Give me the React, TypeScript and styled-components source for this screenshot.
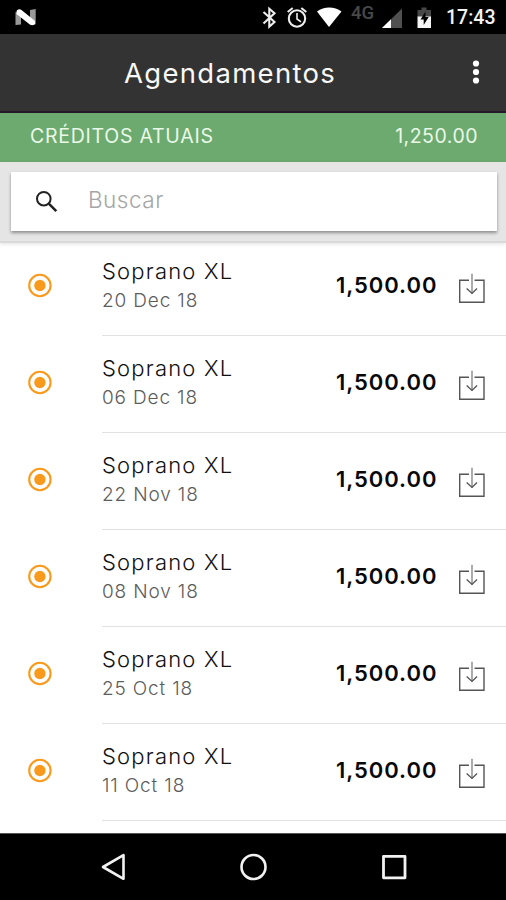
import React from 'react';
import styled, { createGlobalStyle } from 'styled-components';

const GlobalStyle = createGlobalStyle`
  * { box-sizing: border-box; }
  body { margin: 0; background: #fff; }
`;

const Screen = styled.div`
  width: 506px;
  height: 900px;
  display: flex;
  flex-direction: column;
  overflow: hidden;
  background: #fff;
  font-family: Inter, 'Open Sans', sans-serif;
  white-space: nowrap;
`;

const StatusBar = styled.header`
  flex: none;
  height: 34px;
  display: flex;
  justify-content: space-between;
  background: #000;
`;

const Clock = styled.span`
  font: 500 19.5px/36px Roboto, sans-serif;
  color: #f2f2f2;
  width: 62px;
  padding-left: 2px;
  letter-spacing: 0;
`;

const StatusIcons = styled.div`
  display: flex;
`;

const NetworkLabel = styled.span`
  font: 500 18.5px/26px Roboto, sans-serif;
  color: #484848;
  width: 31px;
`;

const AppBar = styled.div`
  flex: none;
  height: 79px;
  display: flex;
  align-items: center;
  background: #333;
  border-bottom: 2px solid #241a29;
  padding-left: 124px;
`;

const Title = styled.h1`
  flex: 1;
  margin: 0;
  font-size: 27.5px;
  font-weight: 400;
  line-height: 36px;
  letter-spacing: 1.3px;
  color: #f8f8f8;
`;

const MenuButton = styled.button`
  display: flex;
  border: 0;
  padding: 0;
  margin: 0 20px 2px 0;
  background: none;
`;

const CreditBar = styled.div`
  flex: none;
  height: 49px;
  display: flex;
  justify-content: space-between;
  padding: 0 28px 0 30px;
  background: #6daa6f;
  color: #eaf8e8;
  font-size: 19.5px;
  line-height: 47px;
`;

const CreditLabel = styled.span`
  letter-spacing: 0.75px;
`;

const CreditValue = styled.span`
  letter-spacing: 0.5px;
`;

const SearchPanel = styled.div`
  flex: none;
  height: 81px;
  position: relative;
  z-index: 1;
  padding: 10px 9px 0 11px;
  background: #e5e5e5;
  border-bottom: 2px solid #dadada;
  box-shadow: 0 1px 4px rgba(0, 0, 0, 0.12);
`;

const SearchBox = styled.label`
  height: 59px;
  display: flex;
  align-items: center;
  padding-left: 23px;
  background: #fff;
  box-shadow: 0 2px 3px rgba(0, 0, 0, 0.38);
`;

const Placeholder = styled.span`
  margin: 0 0 4px 29px;
  font-size: 22.5px;
  font-weight: 300;
  letter-spacing: 0.5px;
  color: #a5a5a5;
`;

const List = styled.ul`
  flex: 1;
  min-height: 0;
  margin: -4px 0 0;
  padding: 0;
  list-style: none;
  overflow: hidden;
`;

const Row = styled.li`
  height: 97px;
  display: flex;
  padding-left: 27px;
`;

const Marker = styled.div`
  width: 75px;
  padding-top: 34px;
`;

const RowBody = styled.div`
  flex: 1;
  display: flex;
  background: linear-gradient(#e2e2e2, #e2e2e2) 0 100% / 100% 1.5px no-repeat;
`;

const Details = styled.div`
  width: 234px;
  padding-top: 18px;
`;

const Name = styled.div`
  font-size: 22px;
  font-weight: 300;
  line-height: 28px;
  letter-spacing: 1.2px;
  color: #111;
`;

const DateText = styled.div`
  font-size: 19px;
  font-weight: 300;
  line-height: 32px;
  letter-spacing: 0.85px;
  color: #5c5c5c;
`;

const Price = styled.div`
  width: 121px;
  padding-top: 32px;
  font-size: 22px;
  font-weight: 600;
  line-height: 28px;
  letter-spacing: 0.95px;
  color: #080808;
`;

const DownloadButton = styled.button`
  align-self: flex-start;
  display: flex;
  margin: 34px 0 0;
  padding: 0;
  border: 0;
  background: none;
`;

const NavBar = styled.nav`
  flex: none;
  height: 67px;
  background: #000;
  border-top: 1px solid #555;
  display: flex;
  justify-content: space-between;
  align-items: center;
  padding: 0 97px 0 99px;
`;

const bookings = ['20 Dec 18', '06 Dec 18', '22 Nov 18', '08 Nov 18', '25 Oct 18', '11 Oct 18'];

function NougatIcon() {
  return (
    <svg width="40" height="34" viewBox="0 0 40 34">
      <path d="M15.5 12l5.500 3v9.500l-5.500 .5zM30 10l5.700-1v15.500l-5.700-3z" fill="#999" />
      <path d="M16.500 12c0-2.500 3-3.500 5-2l13.500 11v3c-1 1.500-4 1.500-5.500.3L16.500 14z" fill="#fff" />
    </svg>
  );
}

function SystemIcons() {
  return (
    <svg width="95" height="34" viewBox="256 0 95 34">
      <path d="M263.500 12L274.500 22l-5.200 4.700V8.800l5.200 4.400L263.500 23.500" fill="none" stroke="#eee" strokeWidth="2.100" />
      <g fill="none" stroke="#eee" strokeWidth="2.100">
        <circle cx="297" cy="18.500" r="8.200" />
        <path d="M287.700 12l5-4M306.300 12l-5-4" />
        <path d="M297 13v6l4 2.800" strokeWidth="1.600" />
      </g>
      <path d="M317 11.500c7-5.500 17.500-5.500 24.500 0L329 27z" fill="#fff" />
    </svg>
  );
}

function SignalAndBattery() {
  return (
    <svg width="62" height="34" viewBox="382 0 62 34">
      <path d="M382 28L402 8.500V28z" fill="#505050" />
      <path d="M382 28l9-8.700V28z" fill="#fff" />
      <path d="M417.500 10h4V7.500h5V10h4.500v7h-13.500z" fill="#484848" />
      <path d="M417.500 16.500H431V28h-13.500z" fill="#f4f4f4" />
      <path d="M425.500 11.500l-5 8h3.200v5.500l5-8h-3.200z" fill="#000" />
    </svg>
  );
}

function SearchIcon() {
  return (
    <svg width="25" height="25" viewBox="0 0 25 25" fill="none" stroke="#222">
      <circle cx="9.800" cy="9.700" r="6.800" strokeWidth="2" />
      <path d="M14.800 14.700l7.500 7.500" strokeWidth="2.600" />
    </svg>
  );
}

function MoreIcon() {
  return (
    <svg width="20" height="26" viewBox="0 0 20 26" fill="#fff">
      <circle cx="10" cy="4.500" r="3.100" />
      <circle cx="10" cy="13" r="3.100" />
      <circle cx="10" cy="21.500" r="3.100" />
    </svg>
  );
}

function RadioIcon() {
  return (
    <svg width="26" height="26" viewBox="0 0 26 26">
      <circle cx="12.900" cy="12.500" r="10.700" fill="none" stroke="#f99a1c" strokeWidth="2.100" />
      <circle cx="12.900" cy="12.500" r="5.700" fill="#f99a1c" />
    </svg>
  );
}

function DownloadIcon() {
  return (
    <svg width="30" height="32" viewBox="0 0 30 32" fill="none" stroke="#555" strokeWidth="1.400">
      <path d="M12 7.300H2.700v21.900H27V7.300h-9.500" />
      <path d="M15 .7v20" stroke="#888" />
      <path d="M9.700 15.500l5.300 4.900 5-4.900" />
    </svg>
  );
}

export default function App() {
  return (
    <Screen>
      <GlobalStyle />
      <StatusBar>
        <NougatIcon />
        <StatusIcons>
          <SystemIcons />
          <NetworkLabel>4G</NetworkLabel>
          <SignalAndBattery />
          <Clock>17:43</Clock>
        </StatusIcons>
      </StatusBar>
      <AppBar>
        <Title>Agendamentos</Title>
        <MenuButton aria-label="Menu"><MoreIcon /></MenuButton>
      </AppBar>
      <CreditBar>
        <CreditLabel>CRÉDITOS ATUAIS</CreditLabel>
        <CreditValue>1,250.00</CreditValue>
      </CreditBar>
      <SearchPanel>
        <SearchBox>
          <SearchIcon />
          <Placeholder>Buscar</Placeholder>
        </SearchBox>
      </SearchPanel>
      <List>
        {bookings.map((date) => (
          <Row key={date}>
            <Marker><RadioIcon /></Marker>
            <RowBody>
              <Details>
                <Name>Soprano XL</Name>
                <DateText>{date}</DateText>
              </Details>
              <Price>1,500.00</Price>
              <DownloadButton aria-label="Download"><DownloadIcon /></DownloadButton>
            </RowBody>
          </Row>
        ))}
      </List>
      <NavBar>
        <svg width="28" height="30" viewBox="0 0 28 30" fill="none" stroke="#f2f2f2" strokeWidth="2.600" strokeLinejoin="round">
          <path d="M4 15L24.500 3.200v23.600z" />
        </svg>
        <svg width="30" height="30" viewBox="0 0 30 30" fill="none" stroke="#f2f2f2" strokeWidth="2.600">
          <circle cx="15.500" cy="15" r="12" />
        </svg>
        <svg width="30" height="30" viewBox="0 0 30 30" fill="none" stroke="#f2f2f2" strokeWidth="2.800" strokeLinejoin="round">
          <path d="M4.500 4.300h21.500v21.500H4.500z" />
        </svg>
      </NavBar>
    </Screen>
  );
}
